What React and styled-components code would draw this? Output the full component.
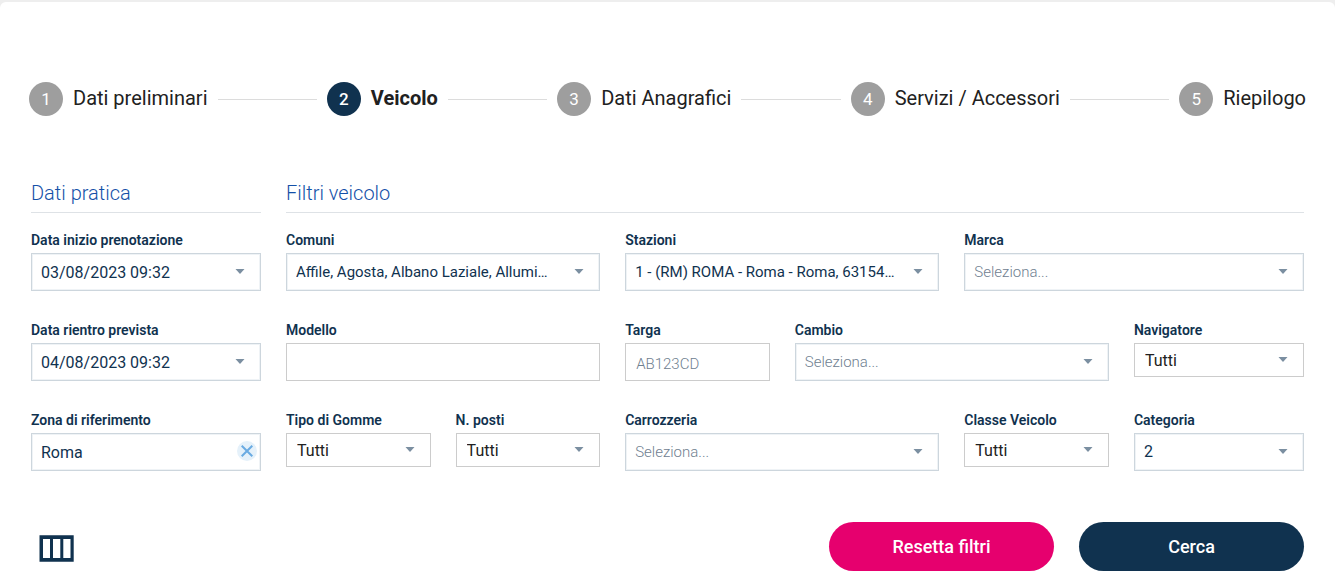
import React from "react";
import styled, { createGlobalStyle, css } from "styled-components";

const navy = "#10324f";
const formFont = `Roboto, "Liberation Sans", sans-serif`;

const GlobalStyle = createGlobalStyle`
  *, *::before, *::after { box-sizing: border-box; }
  body {
    margin: 0;
    background: #eeeeee;
    color: #212121;
    font-family: Roboto, "Liberation Sans", sans-serif;
  }
`;

const Page = styled.div`
  padding-top: 2px;
`;

const Card = styled.main`
  min-height: calc(100vh - 2px);
  padding: 80px 31px 12px;
  background: #fff;
  border-radius: 6px 6px 0 0;
`;

const Stepper = styled.ol`
  display: flex;
  align-items: center;
  gap: 10px;
  margin: 0 -2px;
  padding: 0;
  list-style: none;
`;

const Step = styled.li`
  display: flex;
  align-items: center;
  gap: 10px;
  flex: ${({ $last }) => ($last ? "0 0 auto" : "1 0 auto")};

  &::after {
    content: ${({ $last }) => ($last ? "none" : '""')};
    flex: 1;
    height: 1px;
    min-width: 20px;
    background: #dcdcdc;
  }
`;

const StepNumber = styled.span`
  display: flex;
  align-items: center;
  justify-content: center;
  width: 34px;
  height: 34px;
  border-radius: 50%;
  background: ${({ $active }) => ($active ? navy : "#9e9e9e")};
  color: #fff;
  font-size: 17px;
  font-weight: ${({ $active }) => ($active ? 500 : 400)};
`;

const StepLabel = styled.span`
  font-size: 20px;
  line-height: 32px;
  padding-bottom: 2px;
  font-weight: ${({ $active }) => ($active ? 700 : 400)};
  white-space: nowrap;
`;

const Form = styled.form`
  margin-top: 60px;
`;

const Sections = styled.div`
  display: grid;
  grid-template-columns: minmax(0, 230fr) minmax(0, 1018fr);
  gap: 25px;
`;

const SectionTitle = styled.h2`
  margin: 0 0 17px;
  height: 37px;
  border-bottom: 1px solid #dee2e6;
  color: #1450a8;
  font: 300 20px/34px ${formFont};
`;

const Fields = styled.div`
  display: grid;
  grid-template-columns: ${({ $columns }) => $columns};
  grid-auto-rows: 61px;
  gap: 29px 25px;
`;

const Field = styled.div`
  grid-column: span ${({ $span }) => $span};
  min-width: 0;
`;

const Label = styled.label`
  display: block;
  height: 23px;
  color: ${navy};
  font: 600 14px/20px ${formFont};
  white-space: nowrap;
`;

const ControlBox = styled.div`
  position: relative;
  height: ${({ $compact }) => ($compact ? 34 : 38)}px;
`;

const controlStyle = css`
  display: block;
  width: 100%;
  height: 100%;
  margin: 0;
  padding: ${({ $plain }) => ($plain ? "2px 40px 0 10px" : "0 40px 0 9px")};
  appearance: none;
  border: 1px solid ${({ $plain }) => ($plain ? "#cccccc" : "#cdd6dd")};
  border-radius: 0;
  box-shadow: ${({ $plain }) => ($plain ? "none" : "inset 0 0 0 1px #eff3f6")};
  background: #fff;
  color: ${({ $muted, $dark }) => ($muted ? "#6f8090" : $dark ? "#212121" : navy)};
  font: ${({ $muted }) => ($muted ? 300 : 400)} ${({ $wide }) => ($wide ? 15 : 16)}px/20px ${formFont};
  text-overflow: ellipsis;
  outline: none;

  &::placeholder { color: #6f8090; opacity: 1; font-size: 15px; font-weight: 300; }
  &:focus-visible { border-color: #1450a8; }
`;

const Select = styled.select`${controlStyle}`;
const Input = styled.input`${controlStyle}`;

const CaretSvg = styled.svg`
  position: absolute;
  right: 16px;
  top: calc(50% - 3px);
  width: 10px;
  height: 5px;
  fill: #7b8fa1;
  pointer-events: none;
`;

const ClearButton = styled.button`
  position: absolute;
  right: 4px;
  top: 8px;
  width: 20px;
  height: 20px;
  padding: 4px;
  border: 0;
  border-radius: 50%;
  background: #e5f1fa;
  cursor: pointer;

  svg { display: block; width: 12px; height: 12px; }
`;

const Actions = styled.div`
  display: flex;
  align-items: center;
  gap: 25px;
  margin-top: 51px;
`;

const ColumnsButton = styled.button`
  margin-right: auto;
  padding: 4px 8px 0;
  border: 0;
  background: none;
  cursor: pointer;

  svg { display: block; width: 35px; height: 27px; }
`;

const ActionButton = styled.button`
  width: 225px;
  height: 49px;
  border: 0;
  border-radius: 25px;
  background: ${({ $primary }) => ($primary ? navy : "#e6006e")};
  color: #fff;
  font: 500 18px/24px Roboto, "Liberation Sans", sans-serif;
  cursor: pointer;
`;

const Caret = () => (
  <CaretSvg viewBox="0 0 10 5" aria-hidden="true">
    <path d="M0.5 0h9L5 5z" />
  </CaretSvg>
);

const steps = ["Dati preliminari", "Veicolo", "Dati Anagrafici", "Servizi / Accessori", "Riepilogo"];

const vehicleFilters = [
  { id: "comuni", label: "Comuni", span: 2, value: "Affile, Agosta, Albano Laziale, Allumi…" },
  { id: "stazioni", label: "Stazioni", span: 2, value: "1 - (RM) ROMA - Roma - Roma, 63154…" },
  { id: "marca", label: "Marca", span: 2, value: "Seleziona...", muted: true },
  { id: "modello", label: "Modello", span: 2, text: true },
  { id: "targa", label: "Targa", span: 1, text: true, placeholder: "AB123CD" },
  { id: "cambio", label: "Cambio", span: 2, value: "Seleziona...", muted: true },
  { id: "navigatore", label: "Navigatore", span: 1, value: "Tutti", compact: true },
  { id: "gomme", label: "Tipo di Gomme", span: 1, value: "Tutti", compact: true },
  { id: "posti", label: "N. posti", span: 1, value: "Tutti", compact: true },
  { id: "carrozzeria", label: "Carrozzeria", span: 2, value: "Seleziona...", muted: true },
  { id: "classe", label: "Classe Veicolo", span: 1, value: "Tutti", compact: true },
  { id: "categoria", label: "Categoria", span: 1, value: "2" },
];

function FilterField({ id, label, span, value, muted, text, placeholder, compact }) {
  return (
    <Field $span={span}>
      <Label htmlFor={id}>{label}</Label>
      <ControlBox $compact={compact}>
        {text ? (
          <Input id={id} type="text" placeholder={placeholder} $plain />
        ) : (
          <>
            <Select id={id} $muted={muted} $plain={compact} $dark={compact} $wide={span === 2}>
              <option>{value}</option>
            </Select>
            <Caret />
          </>
        )}
      </ControlBox>
    </Field>
  );
}

function DateField({ id, label, value }) {
  return (
    <Field $span={1}>
      <Label htmlFor={id}>{label}</Label>
      <ControlBox>
        <Input id={id} type="text" defaultValue={value} />
        <Caret />
      </ControlBox>
    </Field>
  );
}

export default function App() {
  const [zone, setZone] = React.useState("Roma");

  return (
    <>
      <GlobalStyle />
      <Page>
        <Card>
          <Stepper>
            {steps.map((name, i) => (
              <Step key={name} $last={i === steps.length - 1} aria-current={i === 1 ? "step" : undefined}>
                <StepNumber $active={i === 1}>{i + 1}</StepNumber>
                <StepLabel $active={i === 1}>{name}</StepLabel>
              </Step>
            ))}
          </Stepper>

          <Form onSubmit={(e) => e.preventDefault()}>
            <Sections>
              <section>
                <SectionTitle>Dati pratica</SectionTitle>
                <Fields $columns="minmax(0, 1fr)">
                  <DateField id="inizio" label="Data inizio prenotazione" value="03/08/2023 09:32" />
                  <DateField id="rientro" label="Data rientro prevista" value="04/08/2023 09:32" />
                  <Field $span={1}>
                    <Label htmlFor="zona">Zona di riferimento</Label>
                    <ControlBox>
                      <Input id="zona" type="text" value={zone} onChange={(e) => setZone(e.target.value)} />
                      <ClearButton type="button" aria-label="Cancella" onClick={() => setZone("")}>
                        <svg viewBox="0 0 12 12" fill="none" stroke="#6aabe2" strokeWidth="2">
                          <path d="M0.7 0.7l10.6 10.6M11.3 0.7L0.7 11.3" />
                        </svg>
                      </ClearButton>
                    </ControlBox>
                  </Field>
                </Fields>
              </section>

              <section>
                <SectionTitle>Filtri veicolo</SectionTitle>
                <Fields $columns="repeat(5, minmax(0, 17fr)) minmax(0, 20fr)">
                  {vehicleFilters.map((filter) => (
                    <FilterField key={filter.id} {...filter} />
                  ))}
                </Fields>
              </section>
            </Sections>

            <Actions>
              <ColumnsButton type="button" aria-label="Colonne">
                <svg viewBox="0 0 35 27" aria-hidden="true">
                  <path
                    fill={navy}
                    fillRule="evenodd"
                    d="M0.5 0.3H34.7V26.7H0.5ZM4 4V23H11V4ZM14 4V23H21.3V4ZM24.3 4V23H31.5V4Z"
                  />
                </svg>
              </ColumnsButton>
              <ActionButton type="reset">Resetta filtri</ActionButton>
              <ActionButton type="submit" $primary>Cerca</ActionButton>
            </Actions>
          </Form>
        </Card>
      </Page>
    </>
  );
}
